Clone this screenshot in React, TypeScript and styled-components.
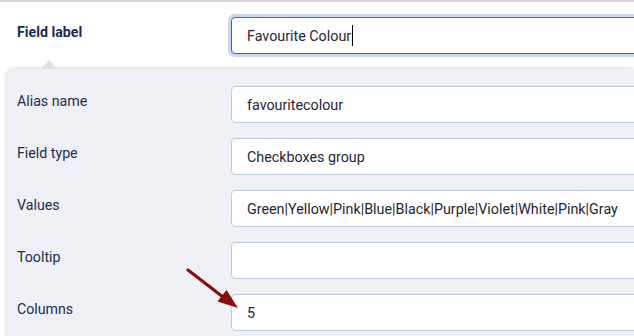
import React from 'react'
import styled, { createGlobalStyle } from 'styled-components'

const GlobalStyle = createGlobalStyle`
  html, body {
    margin: 0;
    padding: 0;
    background: #ffffff;
    overflow: hidden;
  }
  body {
    font-family: Roboto, 'Liberation Sans', sans-serif;
  }
`

interface FieldRow {
  label: string
  value: string
}

const rows: FieldRow[] = [
  { label: 'Alias name', value: 'favouritecolour' },
  { label: 'Field type', value: 'Checkboxes group' },
  {
    label: 'Values',
    value: 'Green|Yellow|Pink|Blue|Black|Purple|Violet|White|Pink|Gray',
  },
  { label: 'Tooltip', value: '' },
  { label: 'Columns', value: '5' },
]

const App: React.FC = () => {
  return (
    <>
      <GlobalStyle />
      <Page>
        <TopRow>
          <Label $bold>Field label</Label>
          <Input $focused>
            Favourite Colour
            <Caret />
          </Input>
        </TopRow>
        <Panel>
          {rows.map((row) => (
            <Row key={row.label}>
              <Label>{row.label}</Label>
              <Input>{row.value}</Input>
            </Row>
          ))}
        </Panel>
        <Arrow width="60" height="50" viewBox="0 0 60 50">
          <line
            x1="2"
            y1="4"
            x2="37"
            y2="31"
            stroke="#850f0f"
            strokeWidth="3.2"
            strokeLinecap="round"
          />
          <polygon points="52,42 31.5,35.5 40.5,24" fill="#850f0f" />
        </Arrow>
      </Page>
    </>
  )
}

export default App

const Page = styled.div`
  position: relative;
  width: 634px;
  height: 336px;
  overflow: hidden;
  border-top: 2px solid #d4d4d4;
  box-sizing: border-box;
`

const TopRow = styled.div`
  display: grid;
  grid-template-columns: 231px 460px;
  padding-top: 15px;
  padding-bottom: 15px;
  > :first-child {
    padding-left: 17px;
  }
`

const Panel = styled.div`
  position: relative;
  margin-left: 7px;
  padding: 17px 0 20px 10px;
  background: #eef0f5;
  border-top-left-radius: 5px;
  box-shadow: 0 0 4px rgba(0, 0, 0, 0.22);
  display: flex;
  flex-direction: column;
  gap: 15px;

  &::before {
    content: '';
    position: absolute;
    top: -9px;
    left: 33px;
    border-left: 9px solid transparent;
    border-right: 9px solid transparent;
    border-bottom: 9px solid #dfe1e5;
  }
`

const Row = styled.div`
  display: grid;
  grid-template-columns: 214px 460px;
`

const Label = styled.div<{ $bold?: boolean }>`
  padding-top: 6px;
  font-size: 14.2px;
  line-height: 18px;
  font-weight: ${({ $bold }) => ($bold ? 700 : 400)};
  color: #1b2d50;
`

const Input = styled.div<{ $focused?: boolean }>`
  box-sizing: border-box;
  height: 37px;
  display: flex;
  align-items: center;
  padding: 0 15px;
  background: #ffffff;
  border: 1px solid ${({ $focused }) => ($focused ? '#2f6cbc' : '#b8c9e1')};
  border-radius: 4px;
  box-shadow: ${({ $focused }) =>
    $focused ? '0 0 0 3px #c9d8ee' : 'none'};
  font-size: 14.3px;
  color: #1f2630;
  white-space: nowrap;
`

const Caret = styled.span`
  display: inline-block;
  width: 1px;
  height: 21px;
  margin-left: 1px;
  background: #000000;
`

const Arrow = styled.svg`
  position: absolute;
  left: 186px;
  top: 264px;
`
